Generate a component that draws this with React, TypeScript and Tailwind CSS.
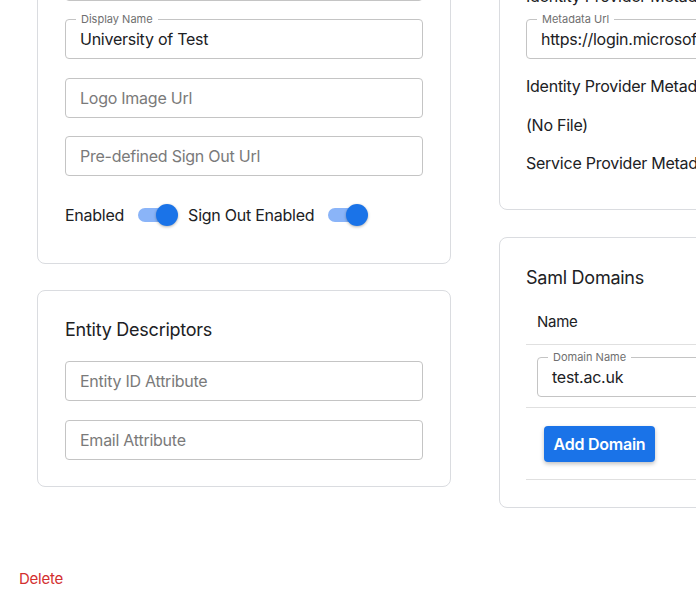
import React from 'react';

type FieldProps = { label?: string; value?: string; placeholder?: string; className?: string };

const Field: React.FC<FieldProps> = ({ label, value, placeholder, className = '' }) => (
  <div className={`relative h-10 rounded-[4px] border border-[#c4c4c4] ${className}`}>
    {label && (
      <span className="absolute -top-[8px] left-[10px] bg-white px-[5px] text-[11px] leading-[14px] tracking-normal text-[#6f6f6f]">
        {label}
      </span>
    )}
    <div className="flex h-full items-center whitespace-nowrap pl-[14px] text-[16px]">
      {value ? <span className="text-[#202124]">{value}</span> : <span className="text-[#7a7a7a]">{placeholder}</span>}
    </div>
  </div>
);

const Toggle: React.FC = () => (
  <div className="relative h-[14px] w-[34px] rounded-full bg-[#8ab4f8]">
    <div className="absolute -top-[4px] left-[18px] h-[22px] w-[22px] rounded-full bg-[#1a73e8] shadow-[0_1px_3px_rgba(0,0,0,0.3)]" />
  </div>
);

const Card: React.FC<{ children: React.ReactNode; className?: string }> = ({ children, className = '' }) => (
  <div className={`rounded-[8px] border border-[#dadce0] bg-white ${className}`}>{children}</div>
);

export default function App() {
  return (
    <div className="h-[609px] w-[696px] overflow-hidden bg-white font-['Inter',sans-serif] tracking-[-0.25px] text-[#202124]">
      <div className="flex items-start gap-[48px] pl-[37px]">
        {/* left column */}
        <div className="-mt-[68px] flex w-[414px] shrink-0 flex-col gap-[26px]">
          <Card className="px-[27px] pb-[36px] pt-[28px]">
            <Field placeholder="Name" />
            <Field className="mt-[18px]" label="Display Name" value="University of Test" />
            <Field className="mt-[19px]" placeholder="Logo Image Url" />
            <Field className="mt-[18px]" placeholder="Pre-defined Sign Out Url" />
            <div className="mt-[27px] flex h-6 items-center text-[16px]">
              <span>Enabled</span>
              <div className="ml-[14px]">
                <Toggle />
              </div>
              <span className="ml-[16px]">Sign Out Enabled</span>
              <div className="ml-[14px]">
                <Toggle />
              </div>
            </div>
          </Card>
          <Card className="px-[27px] pb-[26px] pt-[27px]">
            <div className="text-[18px] leading-6">Entity Descriptors</div>
            <Field className="mt-[19px]" placeholder="Entity ID Attribute" />
            <Field className="mt-[19px]" placeholder="Email Attribute" />
          </Card>
        </div>

        {/* right column */}
        <div className="-mt-[45px] flex w-[414px] shrink-0 flex-col gap-[27px]">
          <Card className="px-[26px] pb-[34px] pt-[28px]">
            <div className="whitespace-nowrap text-[16px] leading-6">Identity Provider Metadata</div>
            <Field className="mt-[11px]" label="Metadata Url" value="https://login.microsoftonline.com/federationmetadata" />
            <div className="mt-[15px] whitespace-nowrap text-[16px] leading-6">Identity Provider Metadata File</div>
            <div className="mt-[15px] text-[16px] leading-6">(No File)</div>
            <div className="mt-[14px] whitespace-nowrap text-[16px] leading-6">Service Provider Metadata File</div>
          </Card>
          <Card className="px-[26px] pb-[27px] pt-[28px]">
            <div className="text-[18px] leading-6">Saml Domains</div>
            <div className="mt-[11px] flex h-[44px] items-center border-b border-[#e0e0e0] pl-[11px] text-[15px]">
              Name
            </div>
            <div className="border-b border-[#e0e0e0] pb-[10px] pl-[11px] pt-[12px]">
              <Field label="Domain Name" value="test.ac.uk" />
            </div>
            <div className="border-b border-[#e0e0e0] pb-[17px] pl-[18px] pt-[18px]">
              <button className="h-9 w-[111px] rounded-[4px] bg-[#1a73e8] text-[16px] font-semibold text-white shadow-[0_2px_4px_rgba(0,0,0,0.25)]">
                Add Domain
              </button>
            </div>
          </Card>
        </div>
      </div>
      <div className="mt-[59px] pl-[19px] text-[15px] leading-6 text-[#d32f2f]">Delete</div>
    </div>
  );
}
